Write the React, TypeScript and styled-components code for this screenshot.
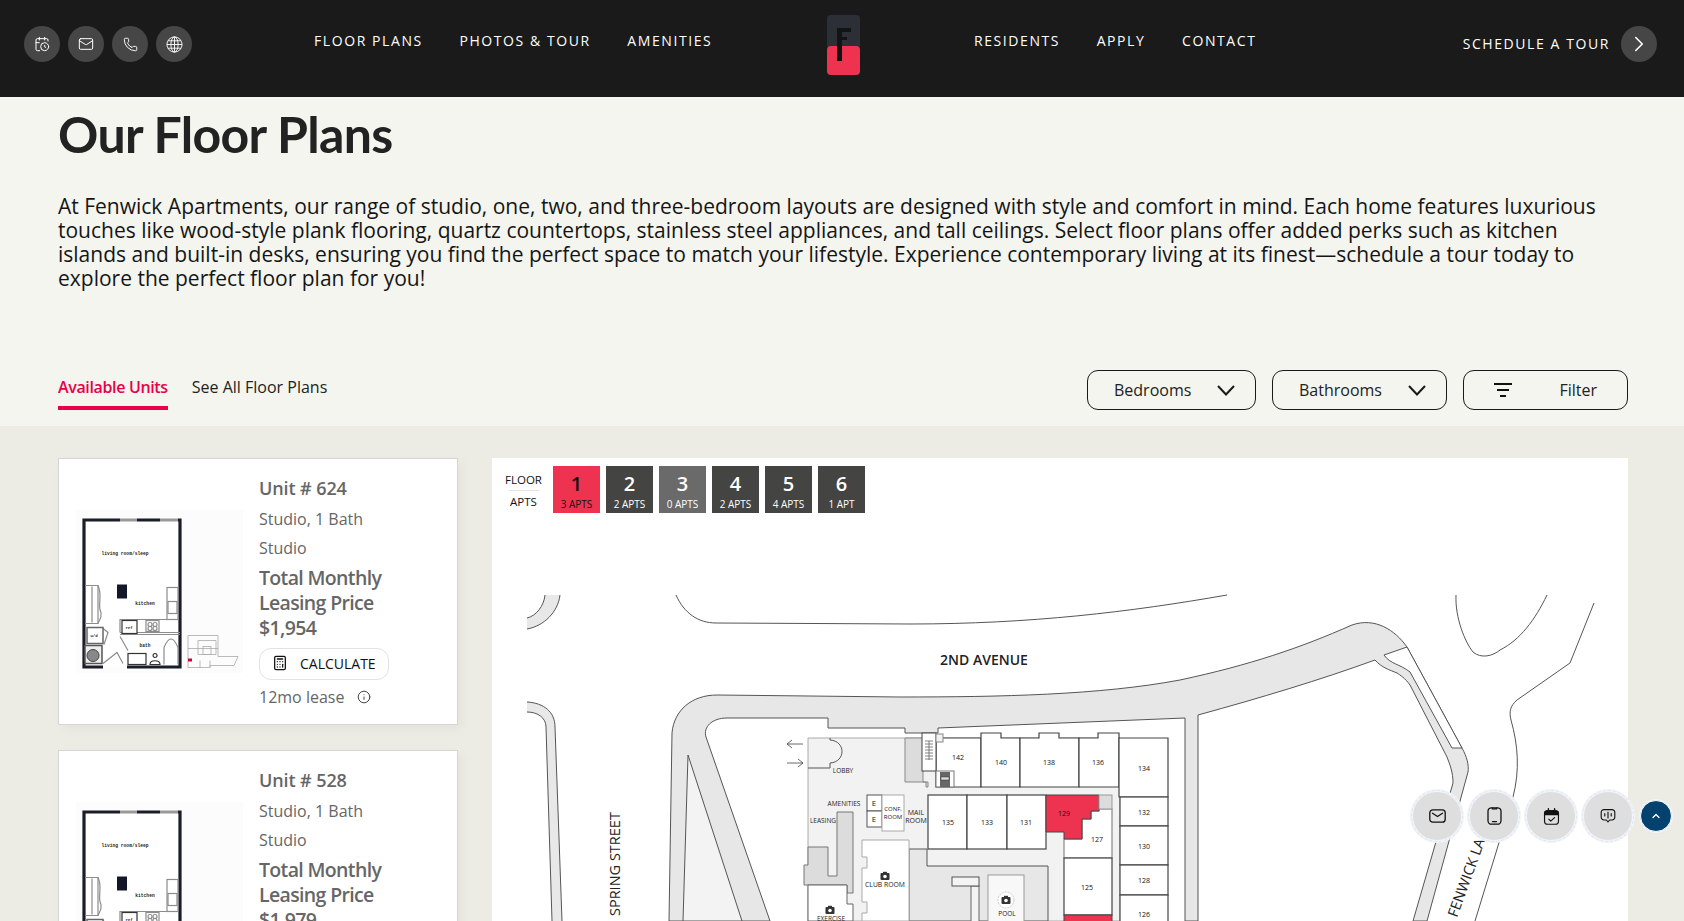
import styled, { createGlobalStyle } from 'styled-components';
import { CalendarClock, Mail, Phone, ChevronRight, ChevronUp, Calculator, Info } from 'lucide-react';

const GlobalStyle = createGlobalStyle`
  html, body { margin: 0; padding: 0; height: 100%; overflow: hidden; }
  body { background: #f4f5ef; font-family: 'Open Sans', sans-serif; }
`;

const Page = styled.div`
  height: 921px;
  overflow: hidden;
  position: relative;
`;

const Header = styled.header`
  height: 97px;
  background: #1a1a1a;
  display: grid;
  grid-template-columns: 290px 513px 147px 1fr;
  padding: 0 27px 0 24px;
  box-sizing: border-box;
`;

const IconRow = styled.div`
  display: flex;
  gap: 8px;
  padding-top: 26px;
`;

const RoundIcon = styled.span`
  width: 36px;
  height: 36px;
  border-radius: 50%;
  background: #464646;
  color: #fff;
  display: flex;
  align-items: center;
  justify-content: center;
`;

const NavGroup = styled.nav`
  display: flex;
  gap: 36.6px;
  padding-top: 31px;
`;

const NavLink = styled.a`
  color: #fff;
  font-size: 14px;
  line-height: 20px;
  letter-spacing: 1.58px;
  white-space: nowrap;
`;

const LogoWrap = styled.div`
  padding-top: 15px;
`;

const RightNav = styled.div`
  display: grid;
  grid-template-columns: 1fr auto;
`;

const TourBox = styled.div`
  display: flex;
  align-items: center;
  justify-content: flex-end;
  gap: 11px;
  height: 88px;
`;

const Intro = styled.section`
  padding: 0 56px 0 58px;
  height: 329px;
  box-sizing: border-box;
`;

const Title = styled.h1`
  margin: 0;
  padding-top: 9px;
  font-family: 'Lato', sans-serif;
  font-weight: 700;
  font-size: 50px;
  line-height: 56px;
  letter-spacing: -0.65px;
  color: #222;
`;

const Lead = styled.p`
  margin: 0;
  padding-top: 32px;
  font-size: 21px;
  line-height: 24px;
  color: #151515;
  width: 1560px;
`;

const ToolRow = styled.div`
  display: flex;
  justify-content: space-between;
  align-items: flex-end;
  margin-top: 80px;
`;

const Tabs = styled.div`
  display: flex;
  gap: 24px;
`;

const Tab = styled.a<{ $active?: boolean }>`
  font-size: 16px;
  line-height: 22px;
  padding-bottom: 8px;
  font-weight: ${(p) => (p.$active ? 600 : 400)};
  letter-spacing: ${(p) => (p.$active ? '-0.35px' : '0')};
  color: ${(p) => (p.$active ? '#e8004a' : '#222')};
  border-bottom: 4px solid ${(p) => (p.$active ? '#e8004a' : 'transparent')};
`;

const Controls = styled.div`
  display: flex;
  gap: 16px;
`;

const SelectBox = styled.button<{ $w: number; $left?: number; $right?: number }>`
  width: ${(p) => p.$w}px;
  height: 40px;
  box-sizing: border-box;
  border: 1px solid #1a1a1a;
  border-radius: 11px;
  background: transparent;
  color: #222;
  font-family: 'Open Sans', sans-serif;
  font-size: 16px;
  display: flex;
  align-items: center;
  justify-content: space-between;
  padding: 0 ${(p) => p.$right ?? 19}px 0 ${(p) => p.$left ?? 26}px;
`;

const Lower = styled.section`
  background: #ecece4;
  display: grid;
  grid-template-columns: 400px 1136px;
  gap: 34px;
  padding: 32px 56px 0 58px;
  height: 495px;
  box-sizing: border-box;
`;

const CardList = styled.div`
  display: flex;
  flex-direction: column;
  gap: 25px;
`;

const Card = styled.article`
  background: #fff;
  border: 1px solid #d6d6d6;
  box-shadow: 4px 4px 10px rgba(0, 0, 0, 0.04);
  height: 267px;
  flex: none;
  box-sizing: border-box;
  display: grid;
  grid-template-columns: 167px 1fr;
  column-gap: 16px;
  padding-left: 17px;
  align-items: center;
`;

const CardInfo = styled.div`
  color: #666;
  align-self: start;
  padding-top: 16px;
`;

const UnitName = styled.div`
  font-size: 18px;
  font-weight: 600;
  line-height: 26px;
  letter-spacing: -0.1px;
  margin-bottom: 4px;
`;

const Detail = styled.div`
  font-size: 16px;
  line-height: 29px;
`;

const Price = styled.div`
  font-size: 19.5px;
  font-weight: 600;
  line-height: 25px;
  margin: 2px 0 8px;
  letter-spacing: -0.65px;
`;

const CalcButton = styled.button`
  width: 130px;
  height: 32px;
  border: 1px solid #e2e2e2;
  border-radius: 12px;
  background: #fff;
  color: #111;
  font-family: 'Open Sans', sans-serif;
  font-size: 14px;
  display: flex;
  align-items: center;
  gap: 12px;
  padding: 0 0 2px 12px;
  margin-bottom: 1px;
`;

const LeaseLine = styled.div`
  display: flex;
  align-items: center;
  gap: 13px;
  font-size: 16px;
  line-height: 32px;
  svg { color: #444; }
`;

const MapPanel = styled.div`
  background: #fff;
  height: 463px;
  overflow: hidden;
`;

const FloorBar = styled.div`
  display: flex;
  gap: 6px;
  padding: 8px 0 7px 0;
`;

const FloorLabels = styled.div`
  width: 55px;
  box-sizing: border-box;
  padding: 6px 0 0 8px;
  font-size: 11.5px;
  color: #111;
  text-align: center;
  display: flex;
  flex-direction: column;
  align-items: center;
  line-height: 15px;
  &::after {
    content: 'APTS';
    display: block;
    border-top: 1px solid #e4e4e4;
    margin-top: 3px;
    padding-top: 3px;
    width: 30px;
  }
`;

const FloorTile = styled.div<{ $state: 'on' | 'off' | 'empty' }>`
  width: 47px;
  height: 47px;
  display: flex;
  flex-direction: column;
  align-items: center;
  color: ${(p) => (p.$state === 'on' ? '#111' : '#fff')};
  background: ${(p) => (p.$state === 'on' ? '#ee3350' : p.$state === 'empty' ? '#6a6a6a' : '#444443')};
`;

const FloorNum = styled.span`
  font-size: 20px;
  font-weight: 600;
  line-height: 26px;
  margin-top: 5px;
`;

const FloorApts = styled.span`
  font-size: 10px;
  line-height: 15px;
`;

const MapSvg = styled.svg`
  display: block;
  width: 1136px;
  height: 401px;
  font-family: 'Open Sans', sans-serif;
  fill: #222;
`;

const FloatBar = styled.div`
  position: absolute;
  left: 1410px;
  top: 789px;
  display: flex;
  align-items: center;
  gap: 3px;
`;

const FloatButton = styled.span`
  width: 48px;
  height: 48px;
  border-radius: 50%;
  background: #dedede;
  border: 3px solid #f1f4f9;
  outline: 1px dashed #dfe6f0;
  outline-offset: -2px;
  color: #111;
  display: flex;
  align-items: center;
  justify-content: center;
`;

const TopButton = styled.span`
  width: 30px;
  height: 30px;
  border-radius: 50%;
  background: #03426f;
  border: 1px solid #fff;
  box-shadow: 0 0 0 1px #f1f4f9;
  color: #fff;
  display: flex;
  align-items: center;
  justify-content: center;
  margin-left: 2px;
`;

const Logo = () => (
  <svg width="33" height="60" viewBox="0 0 33 60">
    <rect width="33" height="34" rx="4" fill="#2d2f36" />
    <rect y="31" width="33" height="29" rx="4" fill="#ee3350" />
    <path d="M10 13H24V17H15V46H10Z" fill="#131313" />
    <path d="M15 22H20V25H15Z" fill="#131313" />
  </svg>
);

const Thumb = () => (
  <svg width="167" height="163" viewBox="76 509.5 167 163">
    <rect x="76" y="509" width="167" height="164" fill="#fcfcfc" />
    <rect x="84" y="520" width="96" height="146" fill="#fff" />
    <g fill="none" stroke="#1b1d29" strokeWidth="3.2">
      <path d="M120 519.5H84V666.5H103" />
      <path d="M137 519.5H160M178 519.5H180V666.5H127" />
    </g>
    <path d="M120 519.5H137M160 519.5H178" stroke="#999" strokeWidth="3.2" />
    <rect x="117" y="584" width="10" height="14" fill="#14172a" />
    <g fill="none" stroke="#8c8c8c" strokeWidth="1.2">
      <path d="M85 585H98L98 623H85M92 586V622" />
      <path d="M98 585C103 595 97 605 101 612C102 618 99 620 98 623" />
      <rect x="167" y="587" width="11" height="32" />
      <rect x="168" y="601" width="9" height="12" />
      <path d="M167 619H120V632M120 632H180M120 634H180" />
      <rect x="146" y="620" width="13" height="11" />
      <circle cx="150" cy="624" r="2" />
      <circle cx="155" cy="624" r="2" />
      <circle cx="150" cy="628" r="2" />
      <circle cx="155" cy="628" r="2" />
      <path d="M164 664V647Q171 630 178 647V664" />
      <path d="M103 663L117 652L123 663M103 628L108 632L104 644M120 636L128 650" />
      <path d="M155 657a2 2 0 1 1 .1 0M150 664C150 659 160 659 160 664Z" stroke="#333" />
    </g>
    <rect x="122" y="620" width="15" height="13" fill="#fff" stroke="#333" strokeWidth="1.2" />
    <rect x="128" y="653" width="18" height="11" fill="#fff" stroke="#333" strokeWidth="1.2" />
    <rect x="87" y="627" width="16" height="16" fill="#fff" stroke="#666" strokeWidth="1.5" />
    <rect x="85" y="645" width="17" height="18" fill="#eee" stroke="#555" strokeWidth="1.5" />
    <circle cx="93" cy="655" r="6" fill="#888" stroke="#444" />
    <g fill="#222" fontFamily="'Liberation Mono', monospace" textAnchor="middle" fontWeight="700">
      <text x="125" y="554" fontSize="4.6">living room/sleep</text>
      <text x="145" y="604" fontSize="4.6">kitchen</text>
      <text x="145" y="646" fontSize="4.5">bath</text>
      <text x="129" y="628" fontSize="4">ref</text>
      <text x="94" y="636" fontSize="4">w/d</text>
    </g>
    <g fill="none" stroke="#aaa" strokeWidth="0.8">
      <path d="M188 635H218V656H238L234 665H210V667H188Z" />
      <path d="M198 640H216V654H198ZM188 648H218M200 660V667M210 660V667" />
      <rect x="203" y="646" width="8" height="8" />
    </g>
    <rect x="188" y="658" width="4" height="3" fill="#d8003a" />
  </svg>
);

const GlobeGrid = () => (
  <svg width="17" height="17" viewBox="0 0 17 17" fill="none" stroke="#fff" strokeWidth="0.9">
    <circle cx="8.5" cy="8.5" r="7.6" />
    <ellipse cx="8.5" cy="8.5" rx="3.6" ry="7.6" />
    <path d="M8.5 1V16M1 8.5H16M2 4.8H15M2 12.2H15" />
  </svg>
);

const DownArrow = () => (
  <svg width="18" height="11" viewBox="0 0 18 11" fill="none" stroke="#1a1a1a" strokeWidth="2">
    <path d="M1 1L9 9.5L17 1" />
  </svg>
);

const FilterLines = () => (
  <svg width="18" height="14" viewBox="0 0 18 14" fill="none" stroke="#111" strokeWidth="2">
    <path d="M0 1H18M3 7H15M6 13H12" />
  </svg>
);

const EnvelopeIcon = () => (
  <svg width="17" height="14" viewBox="0 0 17 14" fill="none" stroke="#111" strokeWidth="1.3" strokeLinecap="round" strokeLinejoin="round">
    <rect x="0.8" y="0.8" width="15.4" height="12.4" rx="3" />
    <path d="M3.5 4.2L8.5 7.5L13.5 4.2" />
  </svg>
);

const PhoneIcon = () => (
  <svg width="15" height="18" viewBox="0 0 15 18" fill="none" stroke="#111" strokeWidth="1.3" strokeLinecap="round">
    <rect x="1" y="0.8" width="13" height="16.4" rx="3.5" />
    <path d="M5.5 1V1.8H9.5V1M5.5 14.6H9.5" />
  </svg>
);

const CalendarCheckFilled = () => (
  <svg width="17" height="19" viewBox="0 0 22 24" fill="none" stroke="#111" strokeWidth="1.5">
    <rect x="2" y="4.5" width="18" height="17.5" rx="4" />
    <path d="M2 9.5V8a3.5 3.5 0 0 1 3.5-3.5h11A3.5 3.5 0 0 1 20 8v1.5Z" fill="#111" />
    <path d="M7 2v4M15 2v4" strokeWidth="1.8" strokeLinecap="round" />
    <path d="M7.5 15.5l2.5 2.5 5-4.5" strokeLinecap="round" strokeLinejoin="round" />
  </svg>
);

const VoiceBubble = () => (
  <svg width="16" height="16" viewBox="0 0 20 20" fill="none" stroke="#111" strokeWidth="1.4" strokeLinecap="round" strokeLinejoin="round">
    <path d="M5 2h10a3.5 3.5 0 0 1 3.5 3.5v6A3.5 3.5 0 0 1 15 15h-3l-2 2.5L8 15H5a3.5 3.5 0 0 1-3.5-3.5v-6A3.5 3.5 0 0 1 5 2Z" />
    <path d="M6 7v3M10 5v7.5M14 7v3" />
  </svg>
);

const units = [
  { name: 'Unit # 624', price: '$1,954' },
  { name: 'Unit # 528', price: '$1,979' },
];

const floors: { n: number; apts: string; state: 'on' | 'off' | 'empty' }[] = [
  { n: 1, apts: '3 APTS', state: 'on' },
  { n: 2, apts: '2 APTS', state: 'off' },
  { n: 3, apts: '0 APTS', state: 'empty' },
  { n: 4, apts: '2 APTS', state: 'off' },
  { n: 5, apts: '4 APTS', state: 'off' },
  { n: 6, apts: '1 APT', state: 'off' },
];

const rooms: [string, number, number][] = [
  ['142', 958, 757], ['140', 1001, 762], ['138', 1049, 762], ['136', 1098, 762], ['134', 1144, 768],
  ['132', 1144, 812], ['130', 1144, 846], ['128', 1144, 880], ['126', 1144, 914],
  ['135', 948, 822], ['133', 987, 822], ['131', 1026, 822], ['129', 1064, 813], ['127', 1097, 839], ['125', 1087, 887],
];

const mapLabels: [string, number, number, number][] = [
  ['LOBBY', 843, 773, 6.5], ['AMENITIES', 844, 806, 6.5], ['LEASING', 823, 823, 6.5],
  ['CONF,', 893, 811, 6], ['ROOM', 893, 819, 6], ['MAIL', 916, 815, 7], ['ROOM', 916, 823, 7],
  ['CLUB ROOM', 885, 887, 6.8], ['POOL', 1007, 916, 6.5], ['EXERCISE', 831, 921, 6.5],
  ['E', 874, 806, 8], ['E', 874, 822, 8],
];

const CameraMark = ({ x, y }: { x: number; y: number }) => (
  <g transform={`translate(${x} ${y})`}>
    <rect x="-4.5" y="-3" width="9" height="7" rx="1" fill="#333" />
    <rect x="-2" y="-4.2" width="4" height="2" fill="#333" />
    <circle cx="0" cy="0.5" r="1.8" fill="#fff" />
  </g>
);

const SiteMap = () => (
  <MapSvg viewBox="492 520 1136 401">
    {/* corner road and left street: open ends have no outline */}
    <path d="M545 595C544 606 536 616 527 618V629C544 626 558 612 560 595Z" fill="#e8e8e8" />
    <path d="M527 702C544 703 555 712 555 727L562 921H552L546 727C546 718 538 712 527 712Z" fill="#e8e8e8" />
    <g stroke="#555" strokeWidth="1">
      <path d="M545 595C544 606 536 616 527 618M527 629C544 626 558 612 560 595" fill="none" />
      <path d="M527 702C544 703 555 712 555 727L562 921M552 921L546 727C546 718 538 712 527 712" fill="none" />
      <path d="M676 595C684 613 698 623 716 623L910 624C1030 624 1130 612 1227 595" fill="none" />
      {/* main loop road */}
      <path
        d="M669 921L672 733C674 710 692 695 717 695L900 697C1000 697 1100 695 1180 680C1250 665 1300 648 1352 625C1375 617 1395 630 1407 647L1462 748C1467 757 1469 765 1468 772L1427 921H1413L1453 783C1453 772 1450 765 1447 757L1410 685C1405 678 1400 675 1397 673C1390 670 1382 668 1375 660C1320 680 1260 698 1198 715V921H1185V718L938 728V733H905V728H828V718H727C712 718 703 727 706 737L770 921Z"
        fill="#e7e7e7"
      />
      <path d="M688 755L683 921H742Z" fill="#f3f3f3" />
      <path d="M1384 655L1407 647L1462 748L1452 748L1410 672C1400 664 1390 664 1384 655Z" fill="#fff" />
      {/* organic paths on the right */}
      <path d="M1456 595C1455 618 1465 642 1473 652C1481 659 1493 656 1500 650C1520 640 1535 620 1547 595" fill="none" />
      <path d="M1594 603L1570 663L1517 700C1510 706 1509 712 1511 720C1518 745 1520 770 1513 797L1475 921" fill="none" />
    </g>

    {/* building floor */}
    <path d="M808 738H1120V921H808Z" fill="#f2f2f2" stroke="#aaa" />
    <path d="M909 849H927V866H1048V921H909Z" fill="#e7e7e7" stroke="#555" />
    <path d="M905 738H923V782H928V787H926V782H905Z" fill="#dcdcdc" stroke="#888" />
    <path d="M837 812H853V893H847V885H804V865H808V847H828V876H837Z" fill="#dcdcdc" stroke="#777" />
    <path d="M808 768H830V763C846 762 846 741 830 740V738" fill="none" stroke="#555" />
    <path d="M803 744H787L792 740M787 744L792 748M787 763H803L798 759M803 763L798 767" fill="none" stroke="#444" strokeWidth="0.8" />

    <g fill="#fff" stroke="#444" strokeWidth="1.2">
      <path d="M936 738H981V787H936Z" />
      <path d="M981 787V733H1001V738H1020V787Z" />
      <path d="M1020 787V738H1039V733H1059V738H1079V787Z" />
      <path d="M1079 787V738H1098V733H1119V787Z" />
      <path d="M1119 738H1168V797H1119Z" />
      <rect x="1120" y="797" width="48" height="29" />
      <rect x="1120" y="826" width="48" height="39" />
      <rect x="1120" y="865" width="48" height="30" />
      <rect x="1120" y="895" width="48" height="40" />
      <rect x="928" y="795" width="39" height="54" />
      <rect x="967" y="795" width="40" height="54" />
      <rect x="1007" y="795" width="39" height="54" />
      <path d="M1099 809H1112V858H1064V839H1082V819H1091V811H1099Z" stroke="#888" />
      <rect x="1064" y="858" width="48" height="57" />
    </g>
    <path d="M1046 795H1099V811H1091V819H1082V839H1064V832H1046Z" fill="#ee3350" stroke="#444" />
    <rect x="1064" y="915" width="48" height="10" fill="#ee3350" stroke="#444" />
    <rect x="1099" y="795" width="13" height="14" fill="#dcdcdc" stroke="#999" />

    {/* stairs and lift */}
    <rect x="922" y="733" width="14" height="38" fill="#fff" stroke="#444" />
    <rect x="936" y="734" width="7" height="8" fill="#f2f2f2" stroke="#888" />
    <path d="M925 741H933M925 744H933M925 747H933M925 750H933M925 753H933M925 756H933M925 759H933M929 741V760" stroke="#666" strokeWidth="0.8" />
    <rect x="936" y="771" width="18" height="16" fill="#fff" stroke="#777" />
    <rect x="940" y="772" width="10" height="15" fill="#666" />
    <rect x="941" y="777" width="8" height="3" fill="#ddd" stroke="#333" strokeWidth="0.5" />

    {/* amenity rooms */}
    <rect x="867" y="795" width="15" height="16" fill="#fff" stroke="#555" />
    <rect x="867" y="811" width="15" height="16" fill="#fff" stroke="#555" />
    <rect x="882" y="795" width="22" height="36" fill="#fff" stroke="#aaa" />
    <path d="M862 840H909V921H862V913H867V902H862V868H867V857H862Z" fill="#fff" stroke="#aaa" />
    <path d="M808 885H847V904H853V921H808Z" fill="#fff" stroke="#666" />
    <rect x="988" y="875" width="36" height="50" fill="#f8f8f8" stroke="#999" />
    <circle cx="1006" cy="900" r="8" fill="#fff" stroke="#aaa" strokeDasharray="2 1" strokeWidth="0.6" />
    <rect x="971" y="886" width="8" height="40" fill="#f4f4f4" stroke="#666" />
    <rect x="952" y="877" width="27" height="9" fill="#f4f4f4" stroke="#555" />
    <CameraMark x={885} y={876} />
    <CameraMark x={1006} y={900} />
    <CameraMark x={830} y={910} />

    <g fontSize="7" textAnchor="middle" fill="#111">
      {rooms.map(([label, x, y]) => (
        <text key={label} x={x} y={y + 2.5}>{label}</text>
      ))}
      {mapLabels.map(([label, x, y, size]) => (
        <text key={label + x + y} x={x} y={y} fontSize={size} fill="#222">{label}</text>
      ))}
    </g>
    <text x="984" y="665" fontSize="14" fontWeight="600" textAnchor="middle">2ND AVENUE</text>
    <text transform="translate(620 916) rotate(-90)" fontSize="14.5">SPRING STREET</text>
    <text transform="translate(1457 918) rotate(-70)" fontSize="14.5">FENWICK LANE</text>
  </MapSvg>
);

export default function App() {
  return (
    <Page>
      <GlobalStyle />
      <Header>
        <IconRow>
          <RoundIcon><CalendarClock size={16} strokeWidth={1.5} /></RoundIcon>
          <RoundIcon><Mail size={16} strokeWidth={1.5} /></RoundIcon>
          <RoundIcon><Phone size={15} strokeWidth={1.5} /></RoundIcon>
          <RoundIcon><GlobeGrid /></RoundIcon>
        </IconRow>
        <NavGroup>
          <NavLink>FLOOR PLANS</NavLink>
          <NavLink>PHOTOS &amp; TOUR</NavLink>
          <NavLink>AMENITIES</NavLink>
        </NavGroup>
        <LogoWrap><Logo /></LogoWrap>
        <RightNav>
          <NavGroup>
            <NavLink>RESIDENTS</NavLink>
            <NavLink>APPLY</NavLink>
            <NavLink>CONTACT</NavLink>
          </NavGroup>
          <TourBox>
            <NavLink>SCHEDULE A TOUR</NavLink>
            <RoundIcon><ChevronRight size={26} strokeWidth={1.5} /></RoundIcon>
          </TourBox>
        </RightNav>
      </Header>
      <Intro>
        <Title>Our Floor Plans</Title>
        <Lead>
          At Fenwick Apartments, our range of studio, one, two, and three-bedroom layouts are designed with style and comfort in mind. Each home features luxurious touches like wood-style plank flooring, quartz countertops, stainless steel appliances, and tall ceilings. Select floor plans offer added perks such as kitchen islands and built-in desks, ensuring you find the perfect space to match your lifestyle. Experience contemporary living at its finest—schedule a tour today to explore the perfect floor plan for you!
        </Lead>
        <ToolRow>
          <Tabs>
            <Tab $active>Available Units</Tab>
            <Tab>See All Floor Plans</Tab>
          </Tabs>
          <Controls>
            <SelectBox $w={169} $left={26} $right={20}>Bedrooms<DownArrow /></SelectBox>
            <SelectBox $w={175} $left={26} $right={20}>Bathrooms<DownArrow /></SelectBox>
            <SelectBox $w={165} $left={30} $right={30}><FilterLines />Filter</SelectBox>
          </Controls>
        </ToolRow>
      </Intro>
      <Lower>
        <CardList>
          {units.map((u) => (
            <Card key={u.name}>
              <Thumb />
              <CardInfo>
                <UnitName>{u.name}</UnitName>
                <Detail>Studio, 1 Bath</Detail>
                <Detail>Studio</Detail>
                <Price>Total Monthly<br />Leasing Price<br />{u.price}</Price>
                <CalcButton><Calculator size={16} strokeWidth={1.9} />CALCULATE</CalcButton>
                <LeaseLine>12mo lease<Info size={14} strokeWidth={1.7} /></LeaseLine>
              </CardInfo>
            </Card>
          ))}
        </CardList>
        <MapPanel>
          <FloorBar>
            <FloorLabels>FLOOR</FloorLabels>
            {floors.map((f) => (
              <FloorTile key={f.n} $state={f.state}>
                <FloorNum>{f.n}</FloorNum>
                <FloorApts>{f.apts}</FloorApts>
              </FloorTile>
            ))}
          </FloorBar>
          <SiteMap />
        </MapPanel>
      </Lower>
      <FloatBar>
        <FloatButton><EnvelopeIcon /></FloatButton>
        <FloatButton><PhoneIcon /></FloatButton>
        <FloatButton><CalendarCheckFilled /></FloatButton>
        <FloatButton><VoiceBubble /></FloatButton>
        <TopButton><ChevronUp size={12} strokeWidth={2.5} /></TopButton>
      </FloatBar>
    </Page>
  );
}
